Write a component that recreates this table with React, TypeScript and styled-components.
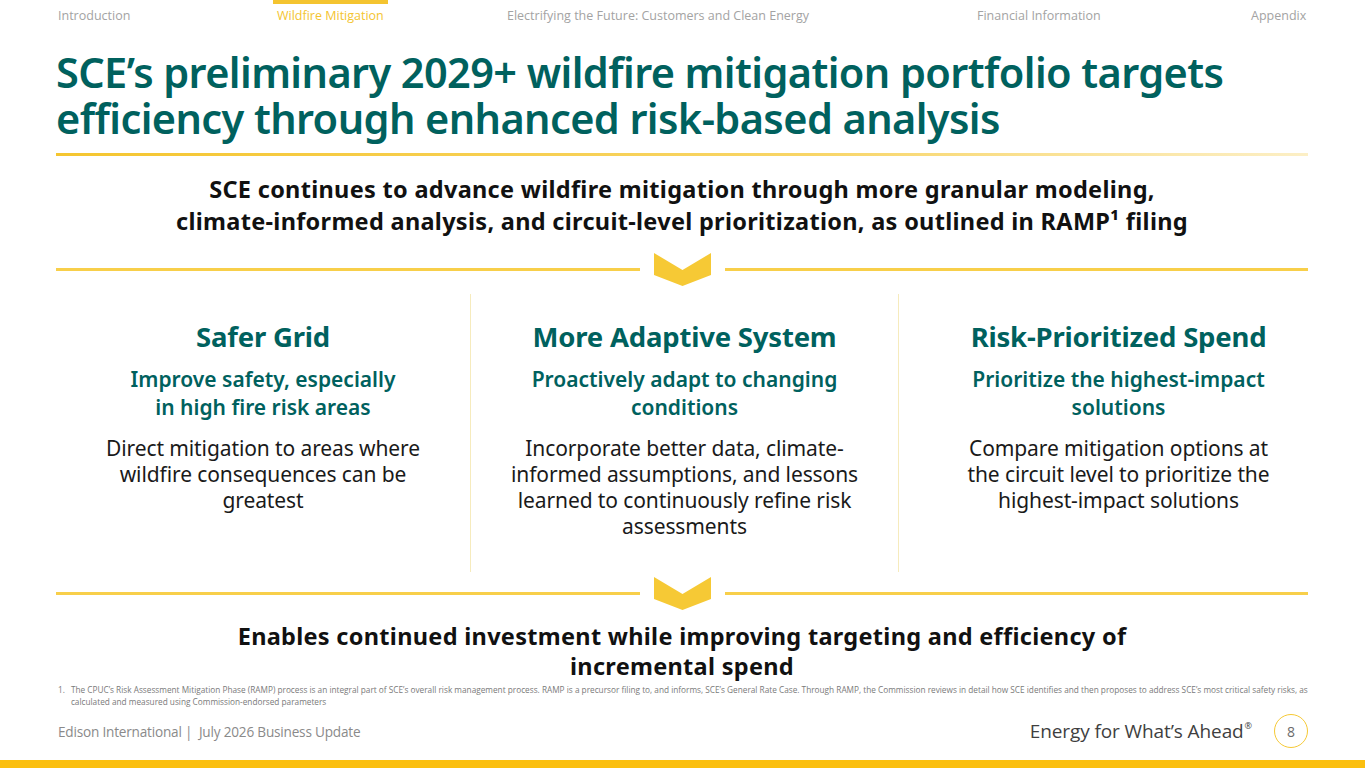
import styled, { createGlobalStyle } from "styled-components";

const GlobalStyle = createGlobalStyle`
  html, body {
    margin: 0;
    padding: 0;
    background: #ffffff;
  }
  body {
    font-family: "Noto Sans", "Open Sans", sans-serif;
  }
`;

const teal = "#00615e";
const yellow = "#f6c935";

const Page = styled.div`
  width: 1365px;
  height: 768px;
  display: flex;
  flex-direction: column;
  overflow: hidden;
  background: #ffffff;
`;

const Content = styled.div`
  flex: 1;
  display: flex;
  flex-direction: column;
  padding: 0 57px 0 56px;
`;

const Nav = styled.nav`
  height: 30px;
  display: grid;
  grid-template-columns: 219px 230px 470px 274px 1fr;
  align-items: center;
  padding: 0 2px;
`;

const NavItem = styled.span<{ $active?: boolean; $end?: boolean }>`
  position: relative;
  justify-self: ${(p) => (p.$end ? "end" : "start")};
  font-family: "Open Sans", sans-serif;
  font-size: 12.5px;
  color: ${(p) => (p.$active ? "#f4c430" : "#a3a3a3")};
  letter-spacing: 0;

  &::before {
    content: "";
    display: ${(p) => (p.$active ? "block" : "none")};
    position: absolute;
    top: -8px;
    left: -4px;
    right: -4px;
    height: 5px;
    background: #f4c430;
  }
`;

const Title = styled.h1`
  margin: 19px 0 0;
  font-family: "Noto Sans", sans-serif;
  font-weight: 600;
  font-size: 41.5px;
  line-height: 46px;
  letter-spacing: -0.6px;
  color: ${teal};
`;

const TitleRule = styled.div`
  margin-top: 12px;
  height: 3px;
  background: linear-gradient(90deg, #f5c630 0%, #f8d566 60%, #fcefc6 100%);
`;

const Lead = styled.p<{ $top: number; $lh: number }>`
  margin: ${(p) => p.$top}px 0 0;
  text-align: center;
  font-weight: 700;
  font-size: 23.5px;
  line-height: ${(p) => p.$lh}px;
  color: #111111;
  letter-spacing: 0.3px;
`;

const Divider = styled.div<{ $top: number }>`
  margin-top: ${(p) => p.$top}px;
  display: flex;
  align-items: center;
  gap: 14px;
`;

const DividerLine = styled.div`
  flex: 1;
  height: 3px;
  background: #f8cf4a;
`;

const Columns = styled.div`
  margin-top: 8px;
  height: 278px;
  display: grid;
  grid-template-columns: 414px 428px 410px;
`;

const Column = styled.div<{ $divider?: boolean; $padLeft?: number }>`
  display: flex;
  flex-direction: column;
  align-items: center;
  text-align: center;
  padding: 26px 0 0 ${(p) => p.$padLeft ?? 0}px;
  border-left: ${(p) => (p.$divider ? "1px solid #f6ebbd" : "none")};
`;

const ColumnTitle = styled.h2`
  margin: 0;
  font-weight: 700;
  font-size: 27.5px;
  line-height: 34px;
  color: ${teal};
  letter-spacing: -0.2px;
`;

const ColumnSub = styled.p`
  margin: 11px 0 0;
  font-weight: 600;
  font-size: 21px;
  line-height: 28px;
  color: ${teal};
  letter-spacing: 0;
`;

const ColumnBody = styled.p`
  margin: 14px 0 0;
  font-weight: 400;
  font-size: 21px;
  line-height: 26px;
  color: #1a1a1a;
  letter-spacing: -0.1px;
`;

const Footnote = styled.p`
  margin: 3px 0 0;
  display: flex;
  gap: 6px;
  padding-left: 2px;
  font-family: "Open Sans", sans-serif;
  font-size: 8.25px;
  line-height: 12px;
  color: #7a7a7a;
`;

const Footer = styled.footer`
  margin-top: 6px;
  height: 34px;
  display: flex;
  align-items: center;
  padding-left: 2px;
`;

const FooterLeft = styled.span`
  flex: 1;
  font-family: "Open Sans", sans-serif;
  font-size: 13.6px;
  color: #8a8a8a;
  letter-spacing: -0.2px;
`;

const Tagline = styled.span`
  font-family: "Open Sans", sans-serif;
  font-size: 19px;
  color: #3f3f3f;
  letter-spacing: -0.1px;

  sup {
    font-size: 9px;
    vertical-align: 9px;
    margin-left: 1px;
  }
`;

const PageNumber = styled.span`
  margin-left: 22px;
  width: 32px;
  height: 32px;
  border: 1.5px solid ${yellow};
  border-radius: 50%;
  display: flex;
  align-items: center;
  justify-content: center;
  font-family: "Open Sans", sans-serif;
  font-size: 14px;
  color: #6b6b6b;
`;

const BottomBar = styled.div`
  margin-top: 10px;
  height: 8px;
  background: #fbbf0f;
`;

function Chevron() {
  return (
    <svg width="57" height="33" viewBox="0 0 57 33">
      <polygon points="0,0 28.5,17 57,0 57,22 28.5,33 0,22" fill={yellow} />
    </svg>
  );
}

const columns = [
  {
    title: "Safer Grid",
    sub: ["Improve safety, especially", "in high fire risk areas"],
    body: ["Direct mitigation to areas where", "wildfire consequences can be", "greatest"],
    padLeft: 0,
  },
  {
    title: "More Adaptive System",
    sub: ["Proactively adapt to changing", "conditions"],
    body: [
      "Incorporate better data, climate-",
      "informed assumptions, and lessons",
      "learned to continuously refine risk",
      "assessments",
    ],
    padLeft: 0,
  },
  {
    title: "Risk-Prioritized Spend",
    sub: ["Prioritize the highest-impact", "solutions"],
    body: ["Compare mitigation options at", "the circuit level to prioritize the", "highest-impact solutions"],
    padLeft: 30,
  },
];

function Lines({ lines }: { lines: string[] }) {
  return (
    <>
      {lines.map((l, i) => (
        <span key={i}>
          {l}
          {i < lines.length - 1 && <br />}
        </span>
      ))}
    </>
  );
}

export default function App() {
  return (
    <Page>
      <GlobalStyle />
      <Content>
        <Nav>
          <NavItem>Introduction</NavItem>
          <NavItem $active>Wildfire Mitigation</NavItem>
          <NavItem>Electrifying the Future: Customers and Clean Energy</NavItem>
          <NavItem>Financial Information</NavItem>
          <NavItem $end>Appendix</NavItem>
        </Nav>

        <Title>
          SCE’s preliminary 2029+ wildfire mitigation portfolio targets
          <br />
          efficiency through enhanced risk-based analysis
        </Title>
        <TitleRule />

        <Lead $top={17} $lh={32}>
          SCE continues to advance wildfire mitigation through more granular modeling,
          <br />
          climate-informed analysis, and circuit-level prioritization, as outlined in RAMP¹ filing
        </Lead>

        <Divider $top={16}>
          <DividerLine />
          <Chevron />
          <DividerLine />
        </Divider>

        <Columns>
          {columns.map((c, i) => (
            <Column key={c.title} $divider={i > 0} $padLeft={c.padLeft}>
              <ColumnTitle>{c.title}</ColumnTitle>
              <ColumnSub>
                <Lines lines={c.sub} />
              </ColumnSub>
              <ColumnBody>
                <Lines lines={c.body} />
              </ColumnBody>
            </Column>
          ))}
        </Columns>

        <Divider $top={5}>
          <DividerLine />
          <Chevron />
          <DividerLine />
        </Divider>

        <Lead $top={11} $lh={30}>
          Enables continued investment while improving targeting and efficiency of
          <br />
          incremental spend
        </Lead>

        <Footnote>
          <span>1.</span>
          <span>
            The CPUC’s Risk Assessment Mitigation Phase (RAMP) process is an integral part of SCE’s overall risk
            management process. RAMP is a precursor filing to, and informs, SCE’s General Rate Case. Through RAMP, the
            Commission reviews in detail how SCE identifies and then proposes to address SCE’s most critical safety
            risks, as
            <br />
            calculated and measured using Commission-endorsed parameters
          </span>
        </Footnote>

        <Footer>
          <FooterLeft>Edison International |&nbsp; July 2026 Business Update</FooterLeft>
          <Tagline>
            Energy for What’s Ahead<sup>®</sup>
          </Tagline>
          <PageNumber>8</PageNumber>
        </Footer>
      </Content>
      <BottomBar />
    </Page>
  );
}
